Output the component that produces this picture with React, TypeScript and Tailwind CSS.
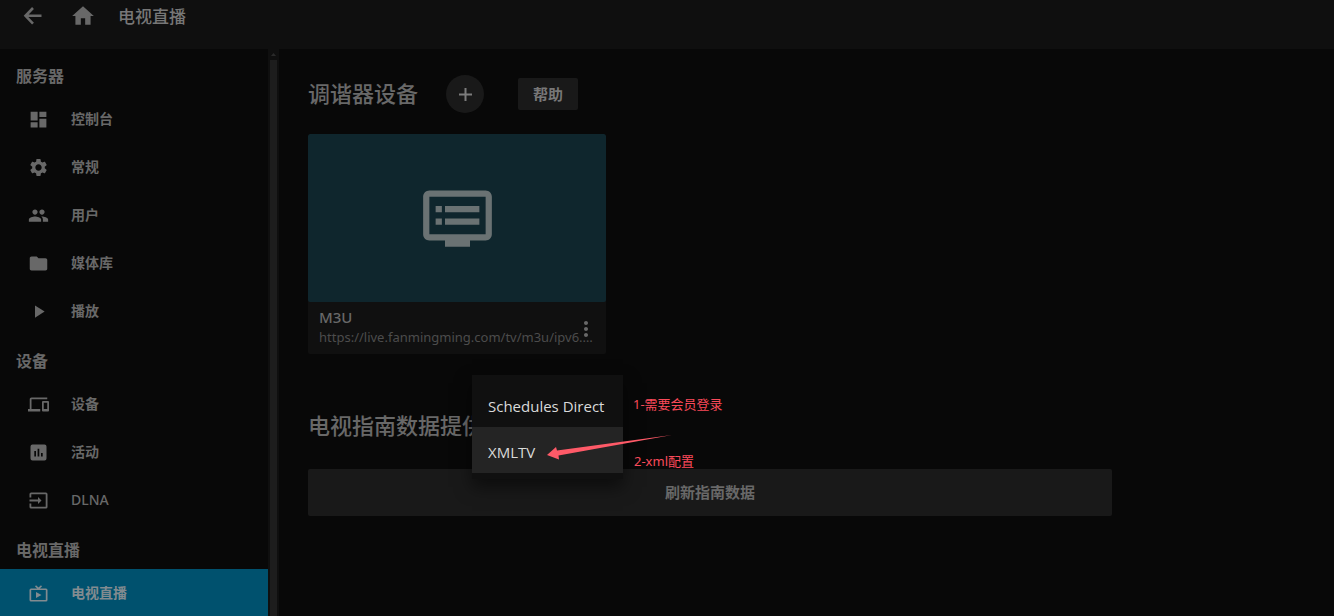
import { MdDashboard, MdDevices, MdDvr, MdFolder, MdHome, MdMoreVert, MdPeople, MdPlayArrow, MdSettings } from 'react-icons/md';
import type { ComponentType } from 'react';

type Icon = ComponentType<{ className?: string }>;

function BackIcon({ className }: { className?: string }) {
  return (
    <svg viewBox="0 0 26 26" fill="none" stroke="currentColor" strokeWidth="2.6" className={className} aria-hidden="true">
      <path d="M21.500 12.800H6M13 5l-7.500 7.800L13 20.600" />
    </svg>
  );
}

function PlusIcon({ className }: { className?: string }) {
  return (
    <svg viewBox="0 0 19 19" fill="none" stroke="currentColor" strokeWidth="2" className={className} aria-hidden="true">
      <path d="M9.500 3v13M3 9.500h13" />
    </svg>
  );
}

function LiveTvIcon({ className }: { className?: string }) {
  return (
    <svg viewBox="0 0 21 21" fill="currentColor" className={className} aria-hidden="true">
      <path d="M8 9v6l5.500-3zM3 18.500q-1.500 0-1.500-1.500V7q0-1.500 1.500-1.500h6.200L7 3.400 8 2.300l2.500 2.300L13 2.300l1 1.100-2.200 2.100H18q1.500 0 1.500 1.500v10q0 1.500-1.500 1.500zM3.200 17h14.600V7H3.200z" />
    </svg>
  );
}

function ActivityIcon({ className }: { className?: string }) {
  return (
    <svg viewBox="0 0 21 21" fill="currentColor" fillRule="evenodd" className={className} aria-hidden="true">
      <path d="M4.500 2.500h12q2 0 2 2v12q0 2-2 2h-12q-2 0-2-2v-12q0-2 2-2zM6.300 9v5.500H8V9zm3.300-2.200v7.700h1.700V6.800zM13 11v3.500h1.700V11z" />
    </svg>
  );
}

function InputIcon({ className }: { className?: string }) {
  return (
    <svg viewBox="0 0 21 21" fill="none" stroke="currentColor" strokeWidth="1.8" className={className} aria-hidden="true">
      <path d="M2.400 7.500V4q0-.7.700-.7h14.800q.7 0 .7.700v13q0 .7-.7.700H3.100q-.7 0-.7-.7v-3.500M1.500 10.500h10" />
      <path d="M10 7l3.500 3.500L10 14z" fill="currentColor" stroke="none" />
    </svg>
  );
}

const groups: { title: string; items: { label: string; icon: Icon; active?: boolean }[] }[] = [
  {
    title: '服务器',
    items: [
      { label: '控制台', icon: MdDashboard },
      { label: '常规', icon: MdSettings },
      { label: '用户', icon: MdPeople },
      { label: '媒体库', icon: MdFolder },
      { label: '播放', icon: MdPlayArrow },
    ],
  },
  {
    title: '设备',
    items: [
      { label: '设备', icon: MdDevices },
      { label: '活动', icon: ActivityIcon },
      { label: 'DLNA', icon: InputIcon },
    ],
  },
  {
    title: '电视直播',
    items: [{ label: '电视直播', icon: LiveTvIcon, active: true }],
  },
];

function Sidebar() {
  return (
    <div className="flex w-[279px] shrink-0">
      <nav className="min-w-0 flex-1 overflow-hidden pt-px">
        {groups.map((group) => (
          <section key={group.title}>
            <h2 className="flex h-[45px] items-center px-4 pt-[6px] text-base font-semibold">{group.title}</h2>
            {group.items.map(({ label, icon: ItemIcon, active }) => (
              <a
                key={label}
                href="#"
                className={`flex h-12 items-center gap-[22px] pl-7 text-sm ${label === 'DLNA' ? 'font-medium' : 'font-semibold'} ${active ? 'bg-[#00516e] text-[#828b90]' : 'text-[#686868]'}`}
              >
                <ItemIcon className="size-[21px]" />
                {label}
              </a>
            ))}
          </section>
        ))}
      </nav>
      <div className="flex w-[11px] flex-col items-center bg-[#0f0f0f]">
        <svg viewBox="0 0 5 3" className="my-1 h-[3px] w-[5px] fill-[#2a2a2a]" aria-hidden="true">
          <path d="M0 3 2.500 0 5 3z" />
        </svg>
        <div className="w-[7px] flex-1 bg-[#1d1d1d]" />
      </div>
    </div>
  );
}

function ProviderMenu() {
  return (
    <div
      role="menu"
      className="absolute top-[326px] left-[193px] flex w-[151px] flex-col bg-[#101010] py-[6px] font-['Open_Sans',sans-serif] text-[15px] text-[#dadada] shadow-[0_8px_16px_rgba(0,0,0,0.5)]"
    >
      <button role="menuitem" className="h-[46px] px-4 pt-1 text-left">
        Schedules Direct
      </button>
      <button role="menuitem" className="h-[46px] bg-[#242424] px-4 pt-1 text-left">
        XMLTV
      </button>
    </div>
  );
}

function Annotations() {
  return (
    <>
      <p className="absolute top-[345px] left-[354px] text-[13px] leading-5 text-[#fa4a5a]">1-需要会员登录</p>
      <svg viewBox="0 0 126 28" className="absolute top-[384px] left-[268px] h-[28px] w-[126px] fill-[#ff5a68]" aria-hidden="true">
        <path d="M0 22 9 14l1 3.500L125 2 11.500 22.500l.5 4z" />
      </svg>
      <p className="absolute top-[402px] left-[355px] text-[13px] leading-5 text-[#fa4a5a]">2-xml配置</p>
    </>
  );
}

export default function App() {
  return (
    <div className="flex h-screen flex-col overflow-hidden bg-[#080808] font-['Noto_Sans','Noto_Sans_CJK_SC',sans-serif] text-[#686868]">
      <header className="flex h-[49px] shrink-0 items-start bg-[#0f0f0f] pl-5">
        <button aria-label="返回" className="flex h-8 items-center">
          <BackIcon className="size-[26px]" />
        </button>
        <button aria-label="主页" className="ml-6 flex h-8 items-center">
          <MdHome className="size-[26px]" />
        </button>
        <h1 className="ml-[22px] text-[17px] leading-[34px] font-medium text-[#777777]">电视直播</h1>
      </header>

      <div className="flex min-h-0 flex-1">
        <Sidebar />
        <main className="relative min-w-0 flex-1 px-[29px] pt-[26px]">
          <div className="flex h-[38px] items-center">
            <h2 className="pb-[2px] text-[22px] leading-9 font-medium">调谐器设备</h2>
            <button aria-label="添加" className="ml-7 flex size-[38px] items-center justify-center rounded-full bg-[#191919] text-[#7c7c7c]">
              <PlusIcon className="size-[19px]" />
            </button>
            <button className="ml-[34px] h-8 rounded-xs bg-[#191919] px-[15px] text-[15px] font-bold text-[#777777]">帮助</button>
          </div>

          <article className="mt-[21px] w-[298px] overflow-hidden rounded-xs bg-[#101010]">
            <div className="flex h-[168px] items-center justify-center rounded-xs bg-[#0f262d] text-[#6a7273]">
              <MdDvr className="size-[75px]" />
            </div>
            <div className="relative h-[52px] px-[11px] pt-[5px]">
              <h3 className="text-[15px] leading-5 font-medium">M3U</h3>
              <p className="truncate text-[13px] leading-5 text-[#4c4c4c]">https://live.fanmingming.com/tv/m3u/ipv6.…</p>
              <button aria-label="更多" className="absolute top-[15px] right-2">
                <MdMoreVert className="size-6" />
              </button>
            </div>
          </article>

          <h2 className="mt-[53px] text-[22px] leading-9 font-medium">电视指南数据提供商</h2>
          <button className="mt-[26px] h-[47px] w-full max-w-[804px] rounded-xs bg-[#191919] text-[15px] font-bold">刷新指南数据</button>

          <ProviderMenu />
          <Annotations />
        </main>
      </div>
    </div>
  );
}
